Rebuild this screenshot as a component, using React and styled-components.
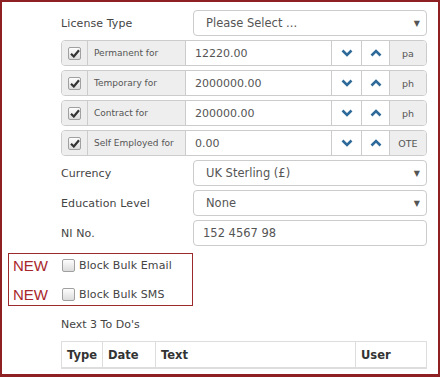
import React from 'react';
import styled, { createGlobalStyle } from 'styled-components';

const Global = createGlobalStyle`
  html, body { margin: 0; padding: 0; background: #fff; }
  body { font-family: "DejaVu Sans", Verdana, sans-serif; color: #444; }
`;

const Frame = styled.div`
  width: 440px;
  height: 377px;
  box-sizing: border-box;
  border: 2px solid #8e1f22;
  border-bottom-width: 3px;
  padding: 8px 11px 0 6px;
  display: flex;
  flex-direction: column;
  gap: 4px;
  overflow: hidden;

  & > * { flex-shrink: 0; }
`;

const Row = styled.div`
  display: flex;
  align-items: center;
  height: 26px;
  margin-left: 53px;
`;

const Label = styled.div`
  width: 132px;
  font-size: 11px;
  color: #444;
  letter-spacing: 0.1px;
`;

const Control = styled.div`
  flex: 1;
  height: 26px;
  box-sizing: border-box;
  border: 1px solid #ccc;
  border-radius: 4px;
  display: flex;
  align-items: center;
  padding-left: ${p => (p.text ? 9 : 12)}px;
  padding-right: 6px;
  font-size: 11.5px;
  color: #555;
`;

const Caret = styled.span`
  margin-left: auto;
  font-size: 8px;
  color: #555;
`;

const Group = styled.div`
  display: flex;
  height: 26px;
  margin-left: 53px;
  box-sizing: border-box;
  border: 1px solid #ccc;
  border-radius: 4px;
  overflow: hidden;
`;

const Addon = styled.div`
  width: ${p => p.w}px;
  flex: none;
  box-sizing: border-box;
  background: ${p => (p.plain ? '#fff' : '#eee')};
  border-left: ${p => (p.first ? 'none' : '1px solid #ccc')};
  display: flex;
  align-items: center;
  justify-content: ${p => (p.center ? 'center' : 'flex-start')};
  padding-left: ${p => (p.center ? 0 : 6)}px;
  font-size: ${p => p.fs || 9}px;
  white-space: nowrap;
  color: #555;
`;

const Input = styled.div`
  flex: 1;
  border-left: 1px solid #ccc;
  display: flex;
  align-items: center;
  padding-left: 9px;
  font-size: 11px;
  color: #555;
`;

const Box = styled.span`
  width: 13px;
  height: 13px;
  box-sizing: border-box;
  border: 1px solid #a0a0a0;
  border-radius: 2px;
  background: linear-gradient(#fdfdfd, #dcdcdc);
  display: inline-flex;
  align-items: center;
  justify-content: center;
  flex: none;
`;

const NewBox = styled.div`
  border: 1px solid #9b2a2d;
  width: 185px;
  box-sizing: border-box;
  padding: 0 0 0 4px;
  margin-top: 3px;
  display: flex;
  flex-direction: column;
  gap: 7px;
`;

const NewRow = styled.div`
  display: flex;
  align-items: center;
  height: 22px;
`;

const NewTag = styled.span`
  width: 49px;
  font-family: "Liberation Sans", Arial, sans-serif;
  font-size: 15px;
  color: #a8282b;
`;

const CheckText = styled.span`
  margin-left: 4px;
  font-size: 11px;
  color: #444;
  letter-spacing: 0.1px;
`;

const Heading = styled.div`
  margin-left: 53px;
  margin-top: 8px;
  height: 14px;
  line-height: 14px;
  font-size: 11px;
  color: #444;
`;

const Table = styled.div`
  margin-left: 53px;
  margin-top: 5px;
  display: grid;
  grid-template-columns: 40px 53px 200px 1fr;
  border: 1px solid #ddd;
  border-bottom-width: 2px;
  height: 28px;
  box-sizing: border-box;
`;

const Th = styled.div`
  display: flex;
  align-items: center;
  padding-left: 5px;
  font-size: 11.5px;
  font-weight: bold;
  color: #333;
  border-left: ${p => (p.first ? 'none' : '1px solid #ddd')};
`;

const Tick = () => (
  <svg width="10" height="9" viewBox="0 0 10 9">
    <path d="M1 4.8 L3.8 7.5 L9 1.3" fill="none" stroke="#333" strokeWidth="2.2" />
  </svg>
);

const Chevron = ({ up }) => (
  <svg width="12" height="8" viewBox="0 0 12 8">
    <path d={up ? 'M1.5 6.5 L6 2 L10.5 6.5' : 'M1.5 1.5 L6 6 L10.5 1.5'} fill="none" stroke="#2f6b9a" strokeWidth="2.6" />
  </svg>
);

const rates = [
  ['Permanent for', '12220.00', 'pa'],
  ['Temporary for', '2000000.00', 'ph'],
  ['Contract for', '200000.00', 'ph'],
  ['Self Employed for', '0.00', 'OTE'],
];

const App = () => (
  <>
    <Global />
    <Frame>
      <Row>
        <Label>License Type</Label>
        <Control>Please Select ...<Caret>▼</Caret></Control>
      </Row>
      {rates.map(([label, value, unit]) => (
        <Group key={label}>
          <Addon w={25} first center><Box><Tick /></Box></Addon>
          <Addon w={98}>{label}</Addon>
          <Input>{value}</Input>
          <Addon w={30} plain center><Chevron /></Addon>
          <Addon w={28} plain center><Chevron up /></Addon>
          <Addon w={37} center fs={9.5}>{unit}</Addon>
        </Group>
      ))}
      <Row>
        <Label>Currency</Label>
        <Control>UK Sterling (£)<Caret>▼</Caret></Control>
      </Row>
      <Row>
        <Label>Education Level</Label>
        <Control>None<Caret>▼</Caret></Control>
      </Row>
      <Row>
        <Label>NI No.</Label>
        <Control text>152 4567 98</Control>
      </Row>
      <NewBox>
        <NewRow><NewTag>NEW</NewTag><Box /><CheckText>Block Bulk Email</CheckText></NewRow>
        <NewRow><NewTag>NEW</NewTag><Box /><CheckText>Block Bulk SMS</CheckText></NewRow>
      </NewBox>
      <Heading>Next 3 To Do's</Heading>
      <Table>
        <Th first>Type</Th>
        <Th>Date</Th>
        <Th>Text</Th>
        <Th>User</Th>
      </Table>
    </Frame>
  </>
);

export default App;
